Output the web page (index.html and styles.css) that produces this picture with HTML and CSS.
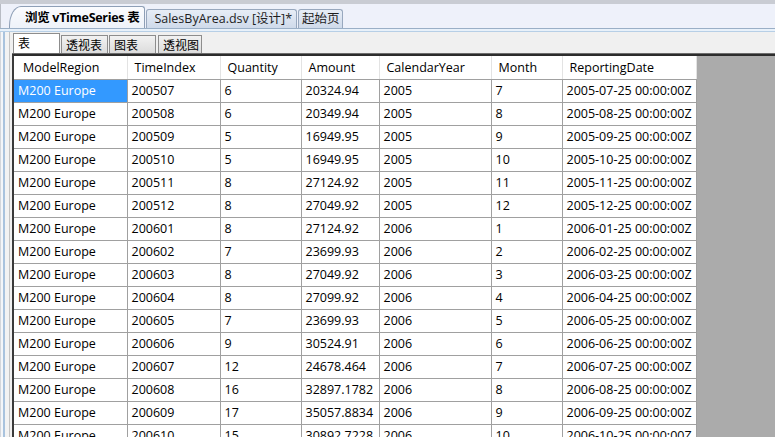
FILE: index.html
```html
<!DOCTYPE html>
<html>
<head>
<meta charset="utf-8">
<link rel="stylesheet" href="styles.css">
</head>
<body>
<div class="page">
  <div class="topstrip"></div>
  <div class="doctabs">
    <div class="dtab active">浏览 vTimeSeries 表</div>
    <div class="dtab">SalesByArea.dsv [设计]*</div>
    <div class="dtab compact">起始页</div>
  </div>
  <div class="docline"></div>
  <div class="body">
    <div class="leftedge"></div>
    <div class="content">
      <div class="subtabs">
        <div class="stab active">表</div>
        <div class="stab">透视表</div>
        <div class="stab">图表</div>
        <div class="stab narrow">透视图</div>
      </div>
      <div class="gridarea">
        <table class="grid">
          <colgroup>
            <col class="c1"><col class="c2"><col class="c3"><col class="c4"><col class="c5"><col class="c6"><col class="c7">
          </colgroup>
          <thead>
            <tr><th>ModelRegion</th><th>TimeIndex</th><th>Quantity</th><th>Amount</th><th>CalendarYear</th><th>Month</th><th>ReportingDate</th></tr>
          </thead>
          <tbody>
            <tr><td class="sel">M200 Europe</td><td>200507</td><td>6</td><td>20324.94</td><td>2005</td><td>7</td><td>2005-07-25 00:00:00Z</td></tr>
            <tr><td>M200 Europe</td><td>200508</td><td>6</td><td>20349.94</td><td>2005</td><td>8</td><td>2005-08-25 00:00:00Z</td></tr>
            <tr><td>M200 Europe</td><td>200509</td><td>5</td><td>16949.95</td><td>2005</td><td>9</td><td>2005-09-25 00:00:00Z</td></tr>
            <tr><td>M200 Europe</td><td>200510</td><td>5</td><td>16949.95</td><td>2005</td><td>10</td><td>2005-10-25 00:00:00Z</td></tr>
            <tr><td>M200 Europe</td><td>200511</td><td>8</td><td>27124.92</td><td>2005</td><td>11</td><td>2005-11-25 00:00:00Z</td></tr>
            <tr><td>M200 Europe</td><td>200512</td><td>8</td><td>27049.92</td><td>2005</td><td>12</td><td>2005-12-25 00:00:00Z</td></tr>
            <tr><td>M200 Europe</td><td>200601</td><td>8</td><td>27124.92</td><td>2006</td><td>1</td><td>2006-01-25 00:00:00Z</td></tr>
            <tr><td>M200 Europe</td><td>200602</td><td>7</td><td>23699.93</td><td>2006</td><td>2</td><td>2006-02-25 00:00:00Z</td></tr>
            <tr><td>M200 Europe</td><td>200603</td><td>8</td><td>27049.92</td><td>2006</td><td>3</td><td>2006-03-25 00:00:00Z</td></tr>
            <tr><td>M200 Europe</td><td>200604</td><td>8</td><td>27099.92</td><td>2006</td><td>4</td><td>2006-04-25 00:00:00Z</td></tr>
            <tr><td>M200 Europe</td><td>200605</td><td>7</td><td>23699.93</td><td>2006</td><td>5</td><td>2006-05-25 00:00:00Z</td></tr>
            <tr><td>M200 Europe</td><td>200606</td><td>9</td><td>30524.91</td><td>2006</td><td>6</td><td>2006-06-25 00:00:00Z</td></tr>
            <tr><td>M200 Europe</td><td>200607</td><td>12</td><td>24678.464</td><td>2006</td><td>7</td><td>2006-07-25 00:00:00Z</td></tr>
            <tr><td>M200 Europe</td><td>200608</td><td>16</td><td>32897.1782</td><td>2006</td><td>8</td><td>2006-08-25 00:00:00Z</td></tr>
            <tr><td>M200 Europe</td><td>200609</td><td>17</td><td>35057.8834</td><td>2006</td><td>9</td><td>2006-09-25 00:00:00Z</td></tr>
            <tr><td>M200 Europe</td><td>200610</td><td>15</td><td>30892.7228</td><td>2006</td><td>10</td><td>2006-10-25 00:00:00Z</td></tr>
          </tbody>
        </table>
        <div class="emptyarea"></div>
      </div>
    </div>
  </div>
</div>
</body>
</html>
```
FILE: styles.css
```css
* { box-sizing: border-box; }
html, body { margin: 0; padding: 0; }
body {
  width: 775px;
  height: 437px;
  overflow: hidden;
  background: #ffffff;
  font-family: "Open Sans", "Noto Sans CJK SC", sans-serif;
  font-size: 12.5px;
  color: #000;
}
.page { width: 775px; height: 437px; display: flex; flex-direction: column; overflow: hidden; }
.topstrip {
  height: 4px;
  background: #c9ccd3;
  flex: none;
}
.doctabs {
  height: 24px;
  flex: none;
  background: #eef1fa;
  display: flex;
  align-items: flex-end;
  padding-left: 8px;
  border-left: 1px solid #b8bcc4;
}
.dtab {
  height: 19px;
  margin-right: 1px;
  padding: 0 4px 0 7px;
  font-size: 12.5px;
  line-height: 18px;
  color: #1e1e1e;
  background: linear-gradient(#e7edf6, #cfdaea);
  border: 1px solid #98a8be;
  border-bottom: none;
  border-radius: 3px 3px 0 0;
  white-space: nowrap;
}
.dtab.compact { padding: 0 2px 0 3px; }
.dtab.active {
  height: 22px;
  line-height: 21px;
  font-weight: bold;
  padding-left: 15px;
  padding-right: 5px;
  font-size: 12.5px;
  letter-spacing: -0.3px;
  background: linear-gradient(#fbfcfe, #eef2f9);
  border-color: #8e9fb6;
  border-top-left-radius: 12px 20px;
  color: #000;
}
.docline {
  height: 4px;
  flex: none;
  border-top: 1px solid #9aafc6;
  border-bottom: 1px solid #b7cfe6;
  background: #e8f1fa;
}
.body { flex: 1; display: flex; min-height: 0; }
.leftedge {
  width: 12px;
  flex: none;
  background: linear-gradient(to right, #d4d7dc 0, #d4d7dc 1px, #f4f6f9 1px, #f4f6f9 3px, #a9c3de 3px, #a9c3de 5px, #f3f3f3 5px, #f3f3f3 9px, #c4c4c4 9px, #c4c4c4 10px, #f0f0f0 10px);
}
.content { flex: 1; display: flex; flex-direction: column; min-width: 0; }
.subtabs {
  height: 22px;
  flex: none;
  background: #f0f0f0;
  display: flex;
  align-items: flex-end;
  padding-left: 1px;
  border-bottom: 1px solid #6d6d6d;
}
.stab {
  height: 18px;
  width: 47px;
  margin-right: 1px;
  padding-left: 4px;
  font-size: 12px;
  line-height: 17px;
  background: linear-gradient(#f2f2f2, #dcdcdc);
  border: 1px solid #8d8d8d;
  border-bottom: none;
  font-family: "Noto Sans CJK SC", sans-serif;
  white-space: nowrap;
}
.stab.active {
  height: 20px;
  background: #ffffff;
  line-height: 18px;
  padding-left: 4px;
}
.stab.narrow { width: 44px; margin-left: 1px; }
.gridarea {
  flex: 1;
  display: flex;
  min-height: 0;
  border-top: 2px solid #2c2c2c;
  border-left: 2px solid #3a3a3a;
  overflow: hidden;
}
.grid {
  border-collapse: collapse;
  table-layout: fixed;
  width: 682px;
  flex: none;
  align-self: flex-start;
}
.c1 { width: 113px; }
.c2 { width: 93px; }
.c3 { width: 81px; }
.c4 { width: 78px; }
.c5 { width: 112px; }
.c6 { width: 71px; }
.c7 { width: 134px; }
.grid th {
  height: 23px;
  text-align: left;
  font-weight: normal;
  padding: 1px 0 0 7px;
  border-right: 1px solid #e3e3e3;
  border-bottom: 1px solid #a0a0a0;
  background: #fff;
  white-space: nowrap;
  overflow: hidden;
}
.grid th:first-child { padding-left: 9px; }
.grid td {
  height: 23px;
  padding: 0 0 0 4px;
  border-right: 1px solid #a0a0a0;
  border-bottom: 1px solid #a0a0a0;
  white-space: nowrap;
  overflow: hidden;
}
.grid td.sel {
  background: #3399ff;
  color: #fff;
}
.emptyarea {
  flex: 1;
  background: #ababab;
}
```
